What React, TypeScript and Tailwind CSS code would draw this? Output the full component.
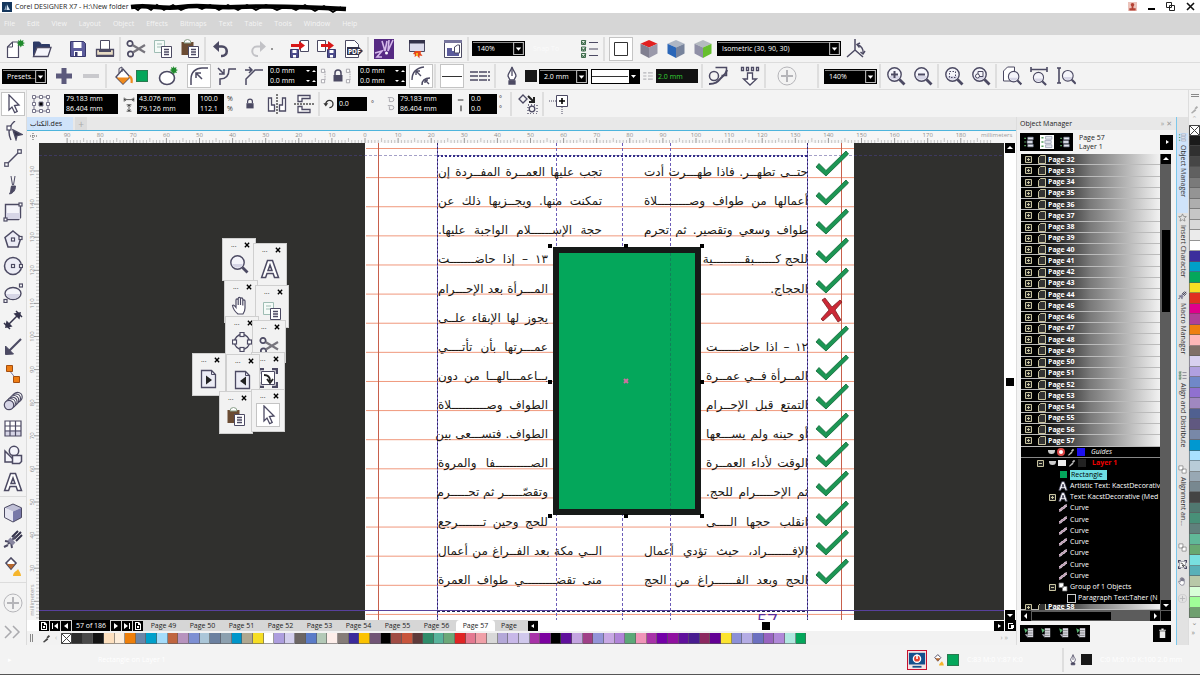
import React from 'react';

const INK = '#4c4a63';

const doc = (
  <g fill="#fff" stroke={INK}>
    <path d="M8.5 7.5h10v11h-10z" />
    <path d="M11 10.5h5M11 13h5M11 15.5h5" strokeWidth="1.3" />
  </g>
);

const lens = (
  <g>
    <circle cx="8.500" cy="8.500" r="6.700" fill="#f4f4fa" stroke={INK} strokeWidth="1.400" />
    <path d="M3 10h11a6 6 0 0 1-11 0z" fill="#d6d5e6" />
    <path d="M13.500 13.500l5 5" stroke={INK} strokeWidth="2.800" />
  </g>
);

const cube = (top: string, left: string, right: string) => (
  <g>
    <path d="M10 1l8.500 3.800L10 8.600 1.500 4.800z" fill={top} />
    <path d="M1.500 4.800L10 8.600V19l-8.500-4.500z" fill={left} />
    <path d="M18.500 4.800L10 8.600V19l8.500-4.500z" fill={right} />
  </g>
);

const burst = <path d="M15.500 0l1 2 2-1-.5 2.200 2 .8-2 1 1 2-2.200-.6-1 2.100-1-2.100-2.200.6 1-2-2-1 2-.8L13 1l2 1z" fill="#1f8a2c" />;

const clipboard = (
  <g>
    <path d="M1.500 3h12v13h-12z" fill="#6b4c33" />
    <path d="M4 4a3.500 3.500 0 0 1 7 0z" fill="#fff" stroke="#8aa08a" />
    {doc}
  </g>
);

const floppy = (
  <g>
    <path d="M2.500 2.500h13l2 2v13h-15z" fill="#5c5c9c" stroke="#38386c" />
    <path d="M5.500 3h8v6h-8zM6 12h8v5H6z" fill="#fff" />
    <path d="M7 13h2.500v4H7z" fill="#38386c" />
  </g>
);

const smallFloppy = (x: number) => (
  <g transform={`translate(${x} 10)`}>
    <path d="M.5.5h8v8h-8z" fill="#4c4c8c" stroke="#38386c" />
    <path d="M2.500 1h4v3h-4zM3 6h3v2.500H3z" fill="#fff" />
  </g>
);

const node = (x: number, y: number, s = 3) => (
  <rect x={x - s / 2} y={y - s / 2} width={s} height={s} fill="#fff" stroke={INK} strokeWidth="1.200" />
);

const letterA = <path d="M7.500 1.500h5l6 17h-4l-1.400-4H7l-1.400 4h-4zM10 6l-2 5.500h4z" fill="#fff" stroke={INK} strokeWidth="1.500" />;

const padlock = (
  <g>
    <path d="M7 9V7a3 3 0 0 1 6 0v2" fill="none" stroke={INK} strokeWidth="1.500" />
    <path d="M5.500 9h9v6.500h-9z" fill={INK} />
  </g>
);

const pen = (
  <g fill="#fff" stroke={INK} strokeWidth="1.300">
    <path d="M10 1c1 4 4 6 4 9l-2 4H8l-2-4c0-3 3-5 4-9z" />
    <path d="M10 3v7" />
    <path d="M7 15h6v3H7z" fill={INK} />
  </g>
);

const icons = {
  app: <g><path d="M0 0h20v20H0z" fill="#14365c" /><path d="M5 16L9 3l7 13z" fill="#dcebf8" /><path d="M9 3l-1 13" stroke="#14365c" strokeWidth="2" /></g>,
  fresh: <g><path d="M2.500 8l5-5h6v15.500h-11z" fill="#fff" stroke={INK} strokeWidth="1.200" /><path d="M7.500 3v5h-5" fill="none" stroke={INK} />{burst}</g>,
  open: <g><path d="M1.500 17V3h6l2 2.500h8V8" fill="#2d3a66" stroke="#2d3a66" /><path d="M1.500 17.500L5 8.500h14l-3 9z" fill="#f5f5fb" stroke={INK} strokeWidth="1.300" /></g>,
  save: floppy,
  print: <g><path d="M5.500 1.500h9v9h-9z" fill="#fff" stroke={INK} /><path d="M1.500 10.500h17v6h-17z" fill="#e8dcc4" stroke={INK} strokeWidth="1.300" /><path d="M1 16h18v2H1z" fill={INK} /><path d="M4 10h12v3H4z" fill={INK} /></g>,
  cut: <g fill="none" stroke={INK} strokeWidth="1.700"><circle cx="4" cy="4.500" r="2.700" /><circle cx="4.500" cy="15" r="2.700" /><path d="M6.500 6L19 13.500M6.800 13.500L19 6" strokeWidth="2.200" stroke="#77757d" /></g>,
  copy: <g><path d="M1.500 1.500h10v12h-10z" fill="#f5fbf8" stroke="#9fbdb4" /><path d="M4 5h5M4 8h5" stroke="#9fbdb4" />{doc}</g>,
  paste: clipboard,
  undo: <g fill="none" stroke={INK} strokeWidth="2.600"><path d="M4 7.500h7a4.600 4.600 0 0 1 0 9.500h-1" /><path d="M8 2L2 7.500 8 13z" fill={INK} stroke="none" /></g>,
  redo: <g fill="none" stroke="#c2c2c6" strokeWidth="2"><path d="M16 7.500H9a4.600 4.600 0 0 0 0 9.500h1" /><path d="M12 2l6 5.500L12 13z" fill="#c2c2c6" stroke="none" /></g>,
  load: <g><path d="M11.500 1.500h8v11h-8z" fill="#fff" stroke={INK} />{smallFloppy(1)}<path d="M2 5h8V2l6 4.500L10 11V8H2z" fill="#d81818" /></g>,
  send: <g><path d="M1.500 1.500h8v11h-8z" fill="#fff" stroke={INK} />{smallFloppy(11)}<path d="M5 5h7V2l6 4.500L12 11V8H5z" fill="#d81818" /></g>,
  pdf: <g><path d="M2.500 1.500h9l4 4v13h-13z" fill="#fff" stroke={INK} /><path d="M4 8h12l4 4-4 4H4z" fill="#33324a" /><text x="5" y="14.500" fontSize="6.500" fontWeight="700" fill="#fff">PDF</text></g>,
  studio: <g><path d="M0 0h20v20H0z" fill="#562a83" /><path d="M1 14l7-2-5 6h5M8 2l3 10 2-10M15 1l-1 11 5-11" fill="none" stroke="#d5b8ea" strokeWidth="1.600" /><circle cx="12.500" cy="14" r="1.500" fill="#fff" /></g>,
  launch: <g><path d="M2.500 1.500h15v11h-15z" fill="#dcdcec" stroke={INK} /><path d="M2 1h16v3.500H2z" fill="#33324a" /><path d="M8 12l-2 3 2 .5-.5 2.500 2.500-1.500 2.500 3v-3l3 .5-2-3 1-2z" fill="#e5461c" /><path d="M9 14h2v3H9z" fill="#f8b020" /></g>,
  welcome: <g><path d="M1.500 1.500h17v17h-17z" fill="#fff" stroke={INK} /><path d="M1 1h18v3H1z" fill="#77759c" /><path d="M4 9h5v3h7v5H4z" fill="#5c5c9c" /><path d="M11.500 8l3-2h2v8h-5z" fill="#fff" stroke={INK} /></g>,
  options: <g fill="none" stroke="#3f6b4c"><path d="M2.500 1.500h4v4h-4zM2.500 8h4v4h-4zM2.500 14.500h4v4h-4z" fill="#e6f3e6" /><path d="M3 3l1.500 2L7 1.500M3 9.500L4.500 11.500 7 8M3 16l1.500 2L7 14.500" strokeWidth="1.200" /><path d="M10 3.500h9M10 10h9M10 16.500h9" stroke={INK} strokeWidth="1.200" /></g>,
  square: <path d="M3.500 3.500h13v13h-13z" fill="#fff" stroke="#333" />,
  cubeTop: cube('#e22020', '#807f90', '#9a99aa'),
  cubeLeft: cube('#aeb6c4', '#2a66b8', '#77839c'),
  cubeRight: cube('#b4bac0', '#8f8fa6', '#66bf2e'),
  axes: <g fill="none" stroke={INK} strokeWidth="1.500"><path d="M9 0v11L1 18M9 11l8 7" /><path d="M12 6a7 7 0 0 1 5 8" /><path d="M14 4l-3 1.500 2.500 3M19 12l-2 3-2.500-2" /></g>,
  plus: <path d="M7.500 2h5v5.500H18v5h-5.500V18h-5v-5.500H2v-5h5.500z" fill="#5c5a7c" />,
  minus: <path d="M2 8h16v4H2z" fill="#c9c9cd" />,
  bucket: <g><path d="M3 11l7-8 7 8-7 7z" fill="#fff" stroke={INK} strokeWidth="1.400" /><path d="M3.500 11.500h13L10 18z" fill="#ef8a1c" /><path d="M6 7V2.500L9 1v5" fill="none" stroke={INK} /><path d="M16 10c3 1 3 4 2.500 7" fill="none" stroke="#ef8a1c" strokeWidth="2.200" /></g>,
  convert: <g><ellipse cx="9" cy="12" rx="7.500" ry="6.500" fill="#fff" stroke={INK} strokeWidth="1.600" />{burst}</g>,
  round: <g fill="none" stroke={INK} strokeWidth="1.500"><path d="M2 19v-6C2 6 7 2 13 2h6" /><path d="M7 7l6 6M7 12V7h5" /></g>,
  scallop: <g fill="none" stroke={INK} strokeWidth="1.500"><path d="M3 19v-6c7 0 9-4 9-10h7" /><path d="M1 2l6 6M7 3v5H2" /></g>,
  chamfer: <g fill="none" stroke={INK} strokeWidth="1.500"><path d="M2 19v-6L11 4h8" /><path d="M1 4h7M5 1l3 3-3 3" /></g>,
  chain: <g fill="#fff" stroke="#99989f"><path d="M10 4v12" strokeDasharray="2 1" /><path d="M5.500 1.500h4v4h-4zM5.500 14.500h4v4h-4z" /></g>,
  lock: padlock,
  relative: <g fill="none" stroke={INK} strokeWidth="1.400"><path d="M1 14C1 6 5 2 13 1M11 19c0-5 3-7 8-7" /><path d="M5 5l5 5M5 9V5h4M14 14l4 4M14 17v-3h3" /></g>,
  line: <path d="M0 10.500h20" stroke="#333" />,
  dashes: <path d="M0 6h20M0 14h20M0 10h20" stroke={INK} strokeWidth="1.600" strokeDasharray="8 1" />,
  pen,
  bars: <path d="M4 6h4M4 10h4M4 14h4M10 6h6M10 10h6M10 14h6" stroke="#b5b5ba" strokeWidth="1.500" />,
  path: <g fill="none" stroke={INK} strokeWidth="1.500"><path d="M7.500 1.500h11v8h-5" /><circle cx="6" cy="10" r="4.500" /><path d="M1 18c8 0 9-3 12-6s5-4 6-8" strokeWidth="2" /></g>,
  down: <g fill="#fff" stroke={INK} strokeWidth="1.300"><path d="M1.500 1.500h2v3h-2zM6.500 1.500h2v3h-2zM11.500 1.500h2v3h-2zM16.500 1.500h2v3h-2z" /><path d="M7.500 7h5v6h4L10 19l-6.500-6h4z" /></g>,
  add: <g fill="none" stroke="#b5b5b9"><circle cx="10" cy="10" r="9" /><path d="M10 4v12M4 10h12" strokeWidth="2" /></g>,
  zoomIn: <g>{lens}<path d="M8.500 5v7M5 8.500h7" stroke={INK} strokeWidth="2" /></g>,
  zoomOut: <g>{lens}<path d="M5 8.500h7" stroke={INK} strokeWidth="2" /></g>,
  zoomSel: <g>{lens}<path d="M5.500 5.500h6v6h-6z" fill="none" stroke={INK} strokeDasharray="1.500 1.500" /></g>,
  zoomAll: <g>{lens}<path d="M7 5.500h5v5H7z" fill="none" stroke={INK} /><circle cx="6.500" cy="10" r="2" fill="#fff" stroke={INK} /></g>,
  zoomPage: <g><path d="M1.500 5l4-4h7v14h-11z" fill="#fff" stroke={INK} /><g transform="translate(5 4) scale(.78)">{lens}</g></g>,
  zoomWidth: <g><path d="M2 1v5M18 1v5M2 3.500h16" stroke={INK} strokeWidth="1.600" /><g transform="translate(3 5) scale(.76)">{lens}</g></g>,
  zoomHeight: <g><path d="M1 2h4M1 17h4M3 2v15" stroke={INK} strokeWidth="1.600" /><g transform="translate(5 3) scale(.8)">{lens}</g></g>,
  pick: <path d="M6 1l10 10-4.500.5 2.700 6-2.500 1.200L9 13l-3 3z" fill="#fff" stroke={INK} strokeWidth="1.300" />,
  shape: <g fill="none" stroke={INK} strokeWidth="1.400"><path d="M12 0C7 4 6 7 6 11s1 6 2 8" />{node(6, 7, 4)}<path d="M10 9l9 4.500-5 1-1 4z" fill="#33324a" /></g>,
  segment: <g><path d="M3.500 16.500l13-13" stroke={INK} strokeWidth="1.500" />{node(3.500, 16.500, 3.500)}{node(16.500, 3.500, 3.500)}</g>,
  brush: <g stroke={INK} fill={INK}><path d="M8 1l1.500 9M12 1l-1.500 9" /><path d="M8.500 11h4c0 4-2 7-6 8 2-3 1-5 2-8z" /></g>,
  rect: <g><path d="M2.500 2.500h15v13l-2 2h-13z" fill="#f4f4fa" stroke={INK} strokeWidth="1.400" /><path d="M3 11h14v6H3z" fill="#d6d5e6" />{node(2.500, 17.500)}{node(17.500, 2.500)}</g>,
  polygon: <g><path d="M10 2l8 6.500-3 9.500H5L2 8.500z" fill="#ececf5" stroke={INK} strokeWidth="1.500" />{node(10, 10.500)}{node(17.500, 9)}</g>,
  circle: <g><circle cx="10" cy="10" r="8.500" fill="#ececf5" stroke={INK} strokeWidth="1.500" />{node(10, 10)}{node(18, 10)}</g>,
  ellipse: <g><ellipse cx="10" cy="10.500" rx="8" ry="6" fill="#f4f4fa" stroke={INK} strokeWidth="1.400" /><path d="M3 11h14c-1 3-4 5-7 5s-6-2-7-5z" fill="#d6d5e6" />{node(2.500, 18)}{node(18, 2.500)}</g>,
  dimension: <g stroke="#33324a" strokeWidth="1.500" fill="#33324a"><path d="M4 16L16 4M1 13l6 6M13 1l6 6" /><path d="M3 17l1-5 4 4zM17 3l-5 1 4 4z" /></g>,
  arrow: <g stroke={INK} strokeWidth="2.200" fill={INK}><path d="M18 2L5 15" /><path d="M2.500 17.500V9l8 8z" strokeWidth="1" /></g>,
  connector: <g><path d="M6 6l8 10" stroke="#77a" /><path d="M3.500 1.500h6v6h-6zM10.500 12.500h6v6h-6z" fill="#ee7d14" stroke="#a34e10" /></g>,
  spring: <g fill="#fff" stroke={INK} strokeWidth="1.200"><circle cx="14.500" cy="6" r="4.700" /><circle cx="12.800" cy="7.600" r="4.700" /><circle cx="11.100" cy="9.200" r="4.700" /><circle cx="9.400" cy="10.800" r="4.700" /><circle cx="7.700" cy="12.400" r="4.700" /><circle cx="6" cy="14" r="4.700" fill="#d6d5e6" /></g>,
  table: <g><path d="M2 3h16v15H2z" fill="#fff" /><path d="M2 12h16v6H2z" fill="#d6d5e6" /><path d="M2 3h16v15H2zM2 8h16M2 13h16M7 3v15M12.500 3v15" fill="none" stroke={INK} strokeWidth="1.200" /></g>,
  shapes: <g fill="#f4f4fa" stroke={INK} strokeWidth="1.500"><path d="M2 6v11h11z" /><circle cx="11" cy="6" r="4.700" /><path d="M9.500 10.500h9v6l-2 2h-7z" /></g>,
  letter: letterA,
  solid: <g>{cube('#bfbfd6', '#e4e4f0', '#7878a8')}<path d="M10 1l8.500 3.800v9.700L10 19l-8.500-4.500V4.800z" fill="none" stroke={INK} /></g>,
  wrench: <g stroke={INK} fill="none" strokeWidth="2"><path d="M11 9l7-7M13 11l6-6M9 7l6-6" stroke="#33324a" /><path d="M13 6L5 14M2 11l6 1 1 6M1 17l4-2" /><path d="M6 9l5 5" strokeWidth="4" stroke="#8886a0" /></g>,
  fill: <g><path d="M3 6l5-5 5 5-5 6z" fill="#fff" stroke={INK} strokeWidth="1.600" /><path d="M4 7h8L8 12z" fill="#b8692e" /><path d="M10 19h8c0-3-2-5-3-7-1 2-5 3-5 7z" fill="#f5b52c" /></g>,
  more: <path d="M2 4l6 6-6 6M10 4l6 6-6 6" fill="none" stroke="#aaaaae" strokeWidth="1.500" />,
  box9: <g fill="#fff" stroke="#77758a"><path d="M3 3h14v14H3z" fill="none" /><path d="M1.500 1.500h3v3h-3zM8.500 1.500h3v3h-3zM15.500 1.500h3v3h-3zM1.500 8.500h3v3h-3zM15.500 8.500h3v3h-3zM1.500 15.500h3v3h-3zM8.500 15.500h3v3h-3zM15.500 15.500h3v3h-3z" /><path d="M8 8h4v4H8z" fill="#000" /></g>,
  size: <g stroke="#333" fill="none"><path d="M4 2v5M16 2v5M4 4.500h12M6 3L4.500 4.500 6 6M14 3l1.500 1.500L14 6M7 11h6M7 19h6M10 11v8M8 13l2-1.500 2 1.500M8 17l2 1.500 2-1.500" /></g>,
  mirrorH: <g fill="#fff" stroke={INK}><path d="M1.500 4h3v7h3v6h-6zM18.500 4h-3v7h-3v6h6z" strokeWidth="1.300" /><path d="M10 0v20" stroke="#000" strokeDasharray="2 1" /></g>,
  mirrorV: <g fill="#fff" stroke={INK}><path d="M4 1.500h12v3H8v3H4zM4 18.500h12v-3H8v-3H4z" strokeWidth="1.300" /><path d="M0 10h20" stroke="#000" strokeDasharray="2 1" /></g>,
  rotate: <g fill="none" stroke="#333" strokeWidth="1.600"><path d="M6 10a4.500 4.500 0 1 1 4.500 4.500" /><path d="M3 9l3 4 3-4z" fill="#333" stroke="none" /></g>,
  centre: <g fill="none" stroke="#99989f"><path d="M6 2h5a2.500 2.500 0 0 1 0 5H8v-4M6 12h5a2.500 2.500 0 0 1 0 5H8v-4" /></g>,
  skew: <path d="M6 5h7M10 12v7" stroke="#333" strokeWidth="1.400" />,
  apply: <g fill="none" stroke={INK} strokeWidth="1.300"><path d="M5 1l4 4-4 4-4-4z" /><path d="M10 2l6 6M16 3v5h-5" strokeWidth="2" stroke="#222" /><circle cx="14" cy="15" r="2.800" /><path d="M10 11h9v9h-9z" strokeDasharray="1 2" /></g>,
  origin: <g fill="none" stroke={INK}><path d="M7.500 1.500h11v11h-11z" fill="#fff" /><path d="M13 4v6M10 7h6" stroke="#000" strokeWidth="1.600" /><path d="M0 7h7M13 13v7" strokeDasharray="1 1" /></g>,
  zoom: lens,
  hand: <path d="M7 18C3 15 2 12 1.500 9.500c1-1 2 0 3.500 2V4c0-1.500 2-1.500 2.200 0V9 2.500c0-1.600 2.300-1.600 2.300 0V9 3c0-1.600 2.300-1.600 2.300 0v6.500V5c0-1.500 2.200-1.500 2.200 0v7c0 3-1 4.500-2 6z" fill="#fff" stroke={INK} strokeWidth="1.200" />,
  nodes: <g><circle cx="10" cy="10" r="7.500" fill="none" stroke={INK} strokeWidth="1.400" />{node(10, 2.500, 4)}{node(10, 17.500, 4)}{node(2.500, 10, 4)}{node(17.500, 10, 4)}</g>,
  next: <g><path d="M2.500 1.500h10l4 4v13h-14z" fill="#ececf5" stroke={INK} strokeWidth="1.300" /><path d="M12.500 1.500v4h4" fill="none" stroke={INK} /><path d="M7 6.500v9l6-4.500z" fill="#222" /></g>,
  prev: <g><path d="M2.500 1.500h10l4 4v13h-14z" fill="#ececf5" stroke={INK} strokeWidth="1.300" /><path d="M12.500 1.500v4h4" fill="none" stroke={INK} /><path d="M13 6.500v9L7 11z" fill="#222" /></g>,
  turn: <g fill="none" stroke={INK}><path d="M3.500 3.500h13v13h-13z" fill="#fff" /><path d="M1 6V1h5M14 1h5v5M19 14v5h-5M6 19H1v-5" strokeWidth="2.500" /><path d="M6 7c4 0 6 2 6 6M9 11l3 4 3-4" stroke="#222" strokeWidth="1.800" /></g>,
  dropper: <path d="M2 18l9-9 3 3-9 7zM10 7l5-5 3 3-5 5z" fill="#444" />,
  trash: <path d="M5 6h10v12H5zM4 3h12v2H4zM8 1h4v2H8z" fill="#eee" />,
  layers: <g fill="#e6e6ee" stroke="#8a94a8"><path d="M8 2h9v4H8zM7 8h9v4H7zM8 14h9v4H8z" /><path d="M2 3h3v2H2zM2 9h3v2H2zM2 15h3v2H2z" fill="#56a060" stroke="none" /></g>,
  newLayer: <g><path d="M8 2h9v15H8z" fill="#d8d8e0" /><path d="M8 6h8M8 10h8M8 14h8" stroke="#555" /><path d="M2 2l6 3-4 5z" fill="#58b070" /><path d="M3 12h5v6z" fill="#a8a8b4" /></g>,
  curve: <g fill="none" stroke="#e8d8e8" strokeWidth="5"><path d="M2 15c6 0 4-5 8-5s2-5 8-5" /><path d="M2 15c6 0 4-5 8-5s2-5 8-5" stroke="#94607c" strokeWidth="1.500" /></g>,
  person: <g><path d="M0 0h20v20H0z" fill="#ecc4bc" /><circle cx="10" cy="6" r="4" fill="#b44134" /><path d="M8 9h4v5h5v5H3v-5h5z" fill="#b44134" /></g>,
  star: <path d="M10 2l2.500 5.500 6 .5-4.500 4 1.500 6-5.500-3-5.500 3L6 12 1.500 8l6-.5z" fill="none" stroke="#777" strokeWidth="1.500" />,
  squares: <g fill="#fff" stroke="#777" strokeWidth="1.500"><path d="M2 2h9v9H2zM9 9h9v9H9z" /></g>,
  power: <g><path d="M0 0h20v20H0z" fill="#f4e4e4" /><path d="M1 2h18v13H1z" fill="#14508c" /><circle cx="10" cy="8.500" r="4" fill="#e04030" stroke="#fff" strokeWidth="1.500" /><path d="M10 4v5" stroke="#fff" strokeWidth="1.800" /><path d="M5 17.500h10" stroke="#14508c" strokeWidth="2" /></g>,
};

type IconName = keyof typeof icons;

const Icon: React.FC<{ name: IconName; className?: string }> = ({ name, className = 'size-5' }) => (
  <svg viewBox="0 0 20 20" className={`${className} shrink-0`} aria-hidden="true">{icons[name]}</svg>
);

const Tool: React.FC<{ name: IconName; className?: string; active?: boolean; narrow?: boolean }> = ({ name, className = '', active, narrow }) => (
  <button
    aria-label={name}
    className={`flex shrink-0 items-center justify-center ${active ? 'h-6 w-6 border border-[#c4c4c4] bg-white' : narrow ? 'h-6 w-4' : 'h-6 w-[27px]'} ${className}`}
  >
    <Icon name={name} className={narrow ? 'size-4' : 'size-5'} />
  </button>
);

const Sep: React.FC = () => <div className="mx-px h-6 w-px shrink-0 border-x border-[#dedede]" />;

const Combo: React.FC<{ label: string; value: string; className: string }> = ({ label, value, className }) => (
  <div className={`relative h-[15px] shrink-0 border border-black bg-black text-white ${className}`}>
    <select aria-label={label} className="h-full w-full appearance-none border-t border-[#888] pl-1 leading-3">
      <option>{value}</option>
    </select>
    <svg viewBox="0 0 10 12" className="pointer-events-none absolute top-0 right-0 h-[13px] w-[11px]">
      <path d="M.5.5h9v11h-9z" fill="#000" stroke="#bbb" />
      <path d="M2.500 5h5L5 8z" fill="#fff" />
    </svg>
  </div>
);

const Pair: React.FC<{ label: string; values: string[]; className: string; spin?: boolean }> = ({ label, values, className, spin }) => (
  <div className={`relative flex h-[20px] shrink-0 flex-col bg-black text-white ${className}`}>
    {values.map((v, i) => (
      <input key={i} aria-label={`${label} ${i + 1}`} defaultValue={v} className="h-[10px] w-full bg-black pl-0.5 leading-[10px]" />
    ))}
    {spin && (
      <svg viewBox="0 0 12 20" className="absolute top-0 right-0 h-5 w-3">
        <path d="M1 4h4L3 6zM7 6h4L9 4zM1 14h4l-2 2zM7 16h4l-2-2z" fill="#fff" />
      </svg>
    )}
  </div>
);

const menus = ['File', 'Edit', 'View', 'Layout', 'Object', 'Effects', 'Bitmaps', 'Text', 'Table', 'Tools', 'Window', 'Help'];

const Header: React.FC = () => (
  <header>
    <div className="flex h-[13px] items-center bg-white pl-[2px] text-[#222]">
      <Icon name="app" className="size-[10px]" />
      <span className="ml-[3px] whitespace-nowrap">Corel DESIGNER X7 - H:\New folder</span>
      <svg viewBox="0 0 222 12" className="h-3 w-[222px]" fill="none" stroke="#000">
        <path d="M2 6c20-3 30 3 50 0s30 1 55 0 60-1 110 2" strokeWidth="4.500" />
        <path d="M3 5l6 4 5-5 8 5 6-5 7 5 9-5 8 5 12-5 9 4 8-4 9 5 9-5 10 5 9-5 9 5 10-5 11 5 10-4 9 4 9-5 10 6 9-5 9 6 8-5" strokeWidth="1.800" />
      </svg>
      <div className="ml-auto flex items-center gap-[11px] pr-[5px]">
        <Icon name="person" className="size-[9px]" />
        <button aria-label="Minimize" className="mt-1 h-[2px] w-[7px] bg-black" />
        <button aria-label="Restore"><svg viewBox="0 0 9 9" className="size-[9px]" fill="#fff" stroke="#222"><path d="M.5.5h5v5h-5zM3.500 3.500h5v5h-5z" /></svg></button>
        <button aria-label="Close"><svg viewBox="0 0 9 9" className="size-[9px]" stroke="#111" strokeWidth="1.600"><path d="M1 1l7 7M8 1L1 8" /></svg></button>
      </div>
    </div>
    <nav className="flex h-[22px] items-center gap-3 bg-[#d6d6d6] pl-1 text-[#f4f4f4]">
      {menus.map((m) => <button key={m}>{m}</button>)}
    </nav>
  </header>
);

const StandardBar: React.FC = () => (
  <div className="flex h-[28px] items-center border-b border-[#dcdcdc] pl-px">
    <Tool name="fresh" />
    <Tool name="open" />
    <Tool name="save" className="ml-[9px]" />
    <Tool name="print" />
    <Sep />
    <Tool name="cut" />
    <Tool name="copy" />
    <Tool name="paste" />
    <Sep />
    <Tool name="undo" />
    <Tool name="redo" className="ml-[10px]" />
    <span className="size-[2px] rounded-full bg-[#777]" />
    <Tool name="load" className="ml-3" />
    <Tool name="send" />
    <Tool name="pdf" />
    <Sep />
    <Tool name="studio" />
    <Tool name="launch" className="ml-[6px]" />
    <Tool name="welcome" className="ml-[9px]" />
    <Sep />
    <Combo label="Zoom level" value="140%" className="ml-[2px] w-[53px]" />
    <span className="w-[50px] pl-2 text-[#fafafa]">Snap To</span>
    <Tool name="options" />
    <Sep />
    <Tool name="square" active className="ml-[3px]" />
    <Tool name="cubeTop" className="ml-[2px]" />
    <Tool name="cubeLeft" />
    <Tool name="cubeRight" />
    <Combo label="Projection" value="Isometric (30, 90, 30)" className="ml-px w-[124px]" />
    <Tool name="axes" className="ml-px" />
  </div>
);

const CurveBar: React.FC = () => (
  <div className="flex h-[27px] items-center border-b border-[#dcdcdc] pl-[2px]">
    <Combo label="Presets" value="Presets..." className="w-[45px]" />
    <Tool name="plus" className="ml-[3px]" />
    <Tool name="minus" />
    <Sep />
    <Tool name="bucket" className="ml-px" />
    <button aria-label="Fill colour" className="size-3 border border-[#2b7a50] bg-[#04a75b]" />
    <Tool name="convert" className="ml-[6px]" />
    <Tool name="round" active className="ml-[6px]" />
    <Tool name="scallop" className="ml-[2px]" />
    <Tool name="chamfer" />
    <Pair label="Corner radius left" values={['0.0 mm', '0.0 mm']} className="ml-px w-[49px]" spin />
    <Tool name="chain" narrow className="-mr-2" />
    <Tool name="lock" className="-mx-px" />
    <Tool name="chain" narrow className="-ml-2" />
    <Pair label="Corner radius right" values={['0.0 mm', '0.0 mm']} className="w-[48px]" spin />
    <Tool name="relative" active className="ml-[3px]" />
    <Sep />
    <Tool name="line" active className="ml-[3px]" />
    <Tool name="dashes" className="ml-[2px]" />
    <Sep />
    <Tool name="pen" className="ml-px" />
    <span className="size-3 bg-[#181818]" />
    <Combo label="Outline width" value="2.0 mm" className="ml-[2px] w-[49px]" />
    <div className="relative ml-[3px] h-[15px] w-[49px] shrink-0 border border-black bg-white">
      <select aria-label="Line style" className="h-full w-full appearance-none text-transparent"><option>Solid</option></select>
      <svg viewBox="0 0 47 13" className="pointer-events-none absolute inset-0 h-[13px] w-[47px]"><path d="M0 6.500h36" stroke="#333" /><path d="M37 0h10v13H37z" /><path d="M39 5h5l-2.500 3z" fill="#fff" /></svg>
    </div>
    <Tool name="bars" narrow />
    <input aria-label="Blend spacing" defaultValue="2.0 mm" className="h-[14px] w-[42px] shrink-0 bg-[#111] pl-[2px] text-[#35d435]" />
    <span className="w-[2px]" />
    <Sep />
    <Tool name="path" />
    <Tool name="down" className="ml-[5px]" />
    <Sep />
    <Tool name="add" className="ml-[6px]" />
    <span className="w-4" />
    <Sep />
    <Combo label="Zoom" value="140%" className="ml-[4px] w-[53px]" />
    <span className="w-px" />
    <Sep />
    <Tool name="zoomIn" />
    <Tool name="zoomOut" />
    <Sep />
    <Tool name="zoomSel" />
    <Tool name="zoomAll" />
    <Sep />
    <Tool name="zoomPage" />
    <Tool name="zoomWidth" />
    <Tool name="zoomHeight" />
  </div>
);

const PropertyBar: React.FC = () => (
  <div className="flex h-[27px] shrink-0 items-center">
    <Tool name="box9" />
    <Pair label="Position" values={['79.183 mm', '86.404 mm']} className="ml-[10px] w-[54px]" />
    <Tool name="size" narrow className="ml-[3px]" />
    <Pair label="Size" values={['43.076 mm', '79.126 mm']} className="w-[53px]" />
    <Pair label="Scale" values={['100.0', '112.1']} className="ml-2 w-[26px]" />
    <span className="ml-[3px] flex w-3 flex-col leading-[10px]"><span>%</span><span>%</span></span>
    <Tool name="lock" narrow className="ml-[3px]" />
    <Tool name="mirrorH" className="ml-[5px]" />
    <Tool name="mirrorV" />
    <Sep />
    <Tool name="rotate" narrow />
    <input aria-label="Rotation" defaultValue="0.0" className="h-[14px] w-[30px] shrink-0 bg-black pl-[2px] text-white" />
    <span className="w-4 pl-1">°</span>
    <Tool name="centre" narrow />
    <Pair label="Rotation centre" values={['79.183 mm', '86.404 mm']} className="-ml-px w-[54px]" />
    <Tool name="skew" narrow className="ml-px" />
    <Pair label="Skew" values={['0.0', '0.0']} className="w-[28px]" />
    <span className="flex w-3 flex-col pl-[2px] leading-[10px]"><span>°</span><span>°</span></span>
    <Sep />
    <Tool name="apply" className="ml-px" />
    <Sep />
    <Tool name="origin" />
  </div>
);

const tools: IconName[] = ['shape', 'segment', 'brush', 'rect', 'polygon', 'circle', 'ellipse', 'dimension', 'arrow', 'connector', 'spring', 'table', 'shapes', 'letter'];

const Toolbox: React.FC = () => (
  <aside className="flex w-[27px] shrink-0 flex-col items-center border-r border-[#dcdcdc]">
    <div className="flex h-[27px] items-center"><Tool name="pick" active /></div>
    {tools.map((t) => <div key={t} className="flex h-[27px] items-center"><Tool name={t} /></div>)}
    <div className="mt-px border-t border-[#dcdcdc] pt-[2px]">
      {(['solid', 'wrench', 'fill'] as IconName[]).map((t) => <div key={t} className="flex h-[27px] items-center"><Tool name={t} /></div>)}
    </div>
    <div className="mt-[2px] border-t border-[#dcdcdc] pt-2">
      <Tool name="add" />
      <Tool name="more" className="mt-[5px]" />
    </div>
  </aside>
);

const RULER_STEP = 33.1;

const TopRuler: React.FC = () => {
  const marks = Array.from({ length: 28 }, (_, i) => i - 9);
  return (
    <svg className="block h-[12px] w-full bg-[#f6f6f6]" fontSize="6">
      <path d="M6 2v8M3 5h8" stroke="#555" strokeDasharray="1 1" />
      {marks.map((m) => {
        const x = 338 + m * RULER_STEP;
        return (
          <g key={m}>
            {[1, 2, 3, 4, 5, 6, 7, 8, 9].map((k) => <path key={k} d={`M${x + k * 3.31} ${k === 5 ? 7 : 9}v4`} stroke="#c4c4c4" />)}
            <path d={`M${x} 7v5`} stroke="#999" />
            <text x={x} y="6" textAnchor="middle" fill="#8c8c8c">{Math.abs(m * 10)}</text>
          </g>
        );
      })}
      <text x="954" y="6" fill="#9a9a9a">millimeters</text>
    </svg>
  );
};

const SideRuler: React.FC = () => (
  <svg className="w-3 shrink-0 bg-[#f6f6f6]" fontSize="6">
    {Array.from({ length: 14 }, (_, i) => {
      const y = 28 + i * RULER_STEP;
      return (
        <g key={i}>
          {[1, 2, 3, 4, 5, 6, 7, 8, 9].map((k) => <path key={k} d={`M9 ${y + k * 3.31}h3`} stroke="#c4c4c4" />)}
          <path d={`M7 ${y}h5`} stroke="#999" />
          {i < 13 && <text transform={`translate(7 ${y}) rotate(-90)`} textAnchor="middle" fill="#8c8c8c">{150 - i * 10}</text>}
        </g>
      );
    })}
    <text transform="translate(7 457) rotate(-90)" textAnchor="middle" fill="#9a9a9a">millimeters</text>
  </svg>
);

const leftText = [
  'تجب عليها العمــرة المفــردة إن',
  'تمكنت منها. ويجــزيها ذلك عن',
  'حجة الإســــــلام الواجبة عليها.',
  '١٣ – إذا حاضـــــــت',
  'المـــرأة بعد الإحـــرام',
  'يجوز لها الإبقاء علــى',
  'عمـــرتها بأن تأتــــي',
  'بــاعمـــالهــا من دون',
  'الطواف وصــــــــــلاة',
  'الطواف. فتســـعى بين',
  'الصــــــــــفا والمروة',
  'وتقصّـــــر ثم تحـــــرم',
  'للحج وحين تـــــــرجع',
  'الــي مكة بعد الفــراغ من أعمال',
  'منى تقضـــــــــي طواف العمرة',
];

const rightText = [
  'حتــى تطهــر. فاذا طهـــرت أدت',
  'أعمالها من طواف وصـــــــــلاة',
  'طواف وسعي وتقصير. ثم تحرم',
  'للحج كــــــبقـــــــــية',
  'الحجاج.',
  '',
  '١٢ – اذا حاضــــــت',
  'المــرأة فــي عمــرة',
  'التمتع قبل الإحــرام',
  'أو حينه ولم يســـعها',
  'الوقت لأداء العمــرة',
  'ثم الإحـــــرام للحج.',
  'انقلب حجها الــــى',
  'الإفـــــــراد، حيث تؤدي أعمال',
  'الحج وبعد الفــــــراغ من الحج',
];

// Lines 4 to 13 wrap around the green rectangle.
const wraps = (i: number) => i > 2 && i < 13;

const Guides: React.FC = () => (
  <svg className="absolute inset-0 h-full w-full" fill="none">
    {Array.from({ length: 17 }, (_, i) => (
      <path key={i} d={`M327 ${5.5 + i * 29.12}h488`} stroke="#f0987c" />
    ))}
    <path d="M339.500 0v480M802.500 0v480" stroke="#c8604c" />
    <path d="M398.500 0v480M768.500 0v480" stroke="#7a68c4" />
    <path d="M768.500 0v480M398.500 0v480" stroke="#2c2468" strokeDasharray="2 2" />
    <path d="M517.500 0v480M583.500 0v480M631.500 0v480" stroke="#6c5cb8" strokeDasharray="3 2" />
    <path d="M0 12.500h965" stroke="#4a4290" strokeDasharray="3 2" opacity=".5" />
    <path d="M398 13h371" stroke="#342c88" strokeWidth="2" strokeDasharray="2 2" />
    <path d="M0 467.500h965" stroke="#58409c" />
    <path d="M398 468.500h371" stroke="#222050" strokeDasharray="3 2" />
  </svg>
);

const Mark: React.FC<{ ok: boolean }> = ({ ok }) => (
  <svg viewBox="0 0 34 28" className="h-7 w-[34px]">
    {ok
      ? <path d="M1 17l3-3.500 7 7L31 1l2.500 3L11 26z" fill="#1c9654" stroke="#0c6434" strokeWidth=".8" />
      : <path d="M7 4l3-2 7 9 8-7 2 2-7 8 6 10-3 2-6-9-9 8-2-2 8-9z" fill="#cc2836" stroke="#7c2020" strokeWidth=".8" />}
  </svg>
);

const handles = [
  'left-[509px] top-[101px]', 'left-[585px] top-[101px]', 'left-[661px] top-[101px]',
  'left-[509px] top-[237px]', 'left-[661px] top-[237px]',
  'left-[509px] top-[371px]', 'left-[585px] top-[371px]', 'left-[661px] top-[371px]',
];

const floats: { name: IconName; at: string }[] = [
  { name: 'zoom', at: 'left-[183px] top-[95px]' },
  { name: 'letter', at: 'left-[214px] top-[100px]' },
  { name: 'hand', at: 'left-[185px] top-[137px]' },
  { name: 'copy', at: 'left-[216px] top-[142px]' },
  { name: 'nodes', at: 'left-[186px] top-[173px]' },
  { name: 'cut', at: 'left-[213px] top-[177px]' },
  { name: 'turn', at: 'left-[212px] top-[209px]' },
  { name: 'next', at: 'left-[153px] top-[210px]' },
  { name: 'prev', at: 'left-[187px] top-[211px]' },
  { name: 'paste', at: 'left-[180px] top-[248px]' },
  { name: 'pick', at: 'left-[212px] top-[246px]' },
];

const Canvas: React.FC = () => (
  <main className="relative min-w-0 flex-1 overflow-hidden bg-[#30302e]">
    <div className="absolute top-0 left-[326px] h-full w-[489px] bg-white" />
    <Guides />
    {[leftText, rightText].map((lines, c) => (
      <div
        key={c}
        dir="rtl"
        lang="ar"
        className={`absolute top-[15px] grid h-[437px] w-[164px] auto-rows-fr grid-cols-1 font-['DejaVu_Sans',sans-serif] text-[12px] leading-7 text-[#1c1814] ${c === 0 ? 'left-[399px]' : 'left-[605px]'}`}
      >
        {lines.map((line, i) => (
          <p
            key={i}
            className={`whitespace-nowrap ${wraps(i) ? (c === 0 ? 'mr-[54px]' : 'ml-[62px]') : ''} ${line.includes(' ') ? '[text-align-last:justify]' : ''}`}
          >
            {line}
          </p>
        ))}
      </div>
    ))}
    <div className="absolute top-[7px] left-[776px] grid h-[437px] auto-rows-fr">
      {rightText.map((_, i) => <Mark key={i} ok={i !== 5} />)}
    </div>
    <div className="absolute top-[104px] left-[514px] h-[268px] w-[148px] border-6 border-[#161a18] bg-[#04a75b]">
      <svg className="absolute inset-0 h-full w-full"><path d="M111.500 0v256" stroke="#12805a" strokeDasharray="3 2" /><path d="M65 126l4 4M69 126l-4 4" stroke="#d070a0" strokeWidth="2" /></svg>
    </div>
    {handles.map((h) => <span key={h} className={`absolute size-[4px] bg-black ${h}`} />)}
    <span className="absolute top-[465px] left-[718px] text-[18px] leading-6 text-[#5c2c9c]">57</span>
    {floats.map(({ name, at }) => (
      <section key={name} className={`absolute flex h-[43px] w-[34px] flex-col border border-[#cfcfcf] bg-[#f2f2f2] ${at}`}>
        <div className="flex h-[12px] items-center justify-between pr-[5px] pl-2">
          <span className="text-[#333]">...</span>
          <button aria-label={`Close ${name}`}><svg viewBox="0 0 7 7" className="size-[6px]" stroke="#000" strokeWidth="1.600"><path d="M1 1l5 5M6 1L1 6" /></svg></button>
        </div>
        <Tool name={name} className="mt-px self-center" active={name === 'pick'} />
      </section>
    ))}
  </main>
);

const bottomSwatches = [
  '#2e2e2e', '#4a4a4a', '#141414', '#fde0bf', '#feeedb', '#ee7f0a', '#6b86a8', '#00a0cb', '#a5dcfa', '#c0653f', '#b793be', '#7d8fd3',
  '#abc6d8', '#6b80a0', '#8ca0af', '#0096ca', '#b0a890', '#f6de24', '#ffffff', '#ad9ede', '#d4d0ee', '#6c6664', '#5b7cc8', '#b3c9b7',
  '#fdeeea', '#857c78', '#3c2a9c', '#fbc200', '#705475', '#000000', '#a04c44', '#c8553c', '#5e3a3a', '#2e8c6a', '#58b49c', '#6ca878',
  '#e02424', '#e47890', '#f0a0a8', '#d8d8d8', '#b4a8d8', '#c8b8e8', '#d0c8ec', '#a832a8', '#7c00a0', '#000000', '#60109c', '#c4a4e0',
  '#a04088', '#9494d8', '#c8a8e4', '#b084d8', '#5ca878', '#f094b8', '#a832a8', '#7400a8', '#9010a0', '#60109c', '#481c90', '#8c2860',
  '#640094', '#fce430', '#8c90d8', '#b4ace4', '#6c70c0', '#9864c0', '#b088d8', '#b0e8e0', '#04a75b',
];

const sideSwatches = [
  '#1a1a1a', '#303030', '#464646', '#606060', '#7a7a7a', '#949494', '#aeaeae', '#c6c6c6', '#d8d8d8', '#ebebeb', '#ffffff', '#3c2e9c',
  '#00a0c8', '#04a75b', '#f8e024', '#e03020', '#e0008c', '#b04098', '#ee7f10', '#ffb8b8', '#807068', '#d8d0f0', '#b0a0e0', '#7088c8',
  '#9070d0', '#a088c0', '#506090', '#605880', '#7888a8', '#0098d0', '#a8e0ff', '#b8ccd8', '#98a8b4', '#788890', '#444444', '#507870',
  '#489078', '#60807c', '#60b898', '#68a870', '#78e0e0', '#58b0b8', '#b8c8a8', '#d8ffd8', '#a0ff98', '#70a070',
];

const NoColour: React.FC = () => (
  <svg viewBox="0 0 11 11" className="size-[11px] shrink-0" fill="#fff" stroke="#444"><path d="M.5.5h10v10H.5zM.5.5l10 10M10.500.5l-10 10" /></svg>
);

const BlackButton: React.FC<{ label: string; d: string; className?: string }> = ({ label, d, className = 'size-[10px]' }) => (
  <button aria-label={label} className={`flex shrink-0 items-center justify-center bg-black ${className}`}>
    <svg viewBox="0 0 10 10" className="size-[10px]" fill="#fff" fillRule="evenodd"><path d={d} /></svg>
  </button>
);

const ADD_PAGE = 'M2 1h4l2 2v6H2zM3 2v6h4V4H5V2zM4 5h2v2H4z';

const PageTabs: React.FC = () => (
  <div className="flex h-[11px] shrink-0 items-center bg-white pl-3">
    <div className="flex h-full shrink-0 items-center gap-px bg-[#d6d6d6] text-[#222]">
      <BlackButton label="Add page before" d={ADD_PAGE} />
      <BlackButton label="First page" d="M2 2h1v6H2zM8 2v6L4 5z" />
      <BlackButton label="Previous page" d="M7 2v6L3 5z" />
      <span className="h-full w-[38px] bg-black text-center leading-[11px] text-white">57 of 186</span>
      <BlackButton label="Next page" d="M3 2v6l4-3z" />
      <BlackButton label="Last page" d="M7 2h1v6H7zM2 2v6l4-3z" />
      <BlackButton label="Add page after" d={ADD_PAGE} />
      <div className="flex h-full items-center">
        {[49, 50, 51, 52, 53, 54, 55, 56, 57].map((n) => (
          <button key={n} className={`h-full w-[39px] whitespace-nowrap leading-[11px] ${n === 57 ? 'rounded-t-sm bg-white' : ''}`}>Page {n}</button>
        ))}
        <button className="h-full w-[32px] pl-[6px] text-left leading-[11px] whitespace-nowrap">Page</button>
      </div>
      <BlackButton label="Scroll left" d="M6 3v4L3 5z" />
    </div>
    <div className="flex h-full flex-1 items-center justify-center"><span className="size-2 bg-black" /></div>
    <BlackButton label="Scroll right" d="M4 3v4l3-2z" />
    <BlackButton label="Navigator" d="M2 2h5v1H3v4h4v1H2zM5 4h3v3H5z" className="ml-px size-[11px]" />
  </div>
);

const Workspace: React.FC = () => (
  <div className="flex min-w-0 flex-1 flex-col">
    <div className="flex h-[13px] shrink-0 bg-[#e8e8e8] leading-[13px]">
      <button className="w-[46px] bg-[#cfe3fa] text-left text-[#222]" dir="ltr"><span className="pl-[3px]">الكتاب.des</span></button>
      <button aria-label="New tab" className="ml-[2px] w-3 bg-[#dcdcdc] text-[10px] leading-3 text-[#aaa]">+</button>
    </div>
    <div className="shrink-0 border-t border-[#4db4dc]"><TopRuler /></div>
    <div className="flex min-h-0 flex-1">
      <SideRuler />
      <Canvas />
      <div className="flex w-3 shrink-0 flex-col items-center justify-between bg-white">
        <BlackButton label="Scroll up" d="M2 6h6L5 3z" />
        <span className="size-2 bg-black" />
        <BlackButton label="Scroll down" d="M2 4h6L5 7z" />
      </div>
    </div>
    <PageTabs />
    <div className="flex h-[14px] shrink-0 items-center bg-[#f2f2f2] pl-[3px]">
      <span className="h-2 w-[3px] border-x border-[#888]" />
      <Icon name="dropper" className="ml-[9px] size-[9px]" />
      <span className="w-[10px] pl-1 text-[#bbb]">‹</span>
      <NoColour />
      <div className="flex h-[11px] w-[734px]">
        {bottomSwatches.map((c, i) => <button key={i} aria-label={c} className="flex-1 border-r border-b border-[#5a5a5a]/60" style={{ background: c }} />)}
      </div>
      <span className="ml-auto pr-2 text-[#aaa]">› »</span>
    </div>
  </div>
);

const Row: React.FC<{ children: React.ReactNode; className?: string }> = ({ children, className = '' }) => (
  <li className={`flex min-h-0 flex-2 items-center gap-[2px] overflow-hidden whitespace-nowrap ${className}`}>{children}</li>
);

const Expander: React.FC<{ open?: boolean }> = ({ open }) => (
  <svg viewBox="0 0 7 7" className="size-[7px] shrink-0" fill="#222" stroke="#c8c4a0"><path d="M.5.5h6v6h-6zM2 3.500h3" />{!open && <path d="M3.500 2v3" />}</svg>
);

const PageRow: React.FC<{ n: number; last?: boolean }> = ({ n, last }) => (
  <Row className={`bg-linear-to-r from-black from-5% via-[#7a7a7a] via-50% to-[#f2f2f2] pl-1 font-bold text-white shadow-[inset_0_-1px_#bbb] ${last ? 'h-[6px] flex-none' : ''}`}>
    <Expander />
    <svg viewBox="0 0 8 9" className="ml-1 h-[9px] w-2 shrink-0" fill="#333" stroke="#c8c4a0"><path d="M2.500.5h5v8h-7v-6z" /></svg>
    <span>Page {n}</span>
  </Row>
);

const ObjectManager: React.FC = () => (
  <section className="flex w-[160px] shrink-0 flex-col border-l border-[#ddd] bg-[#f3f3f3] text-[#222]">
    <div className="flex h-[13px] shrink-0 items-center bg-[#e8e8e8] pl-[3px]">
      <h2>Object Manager</h2>
      <span className="ml-auto pr-1 text-[#999]">» ✕</span>
    </div>
    <div className="flex h-6 shrink-0 items-center px-[3px]">
      <div className="flex h-[18px] w-[53px] items-center justify-around bg-black">
        <Icon name="layers" className="size-3" />
        <button aria-label="Edit across layers" className="bg-white"><Icon name="layers" className="size-[14px]" /></button>
        <Icon name="layers" className="size-3" />
      </div>
      <p className="pl-[6px] leading-[9px]">Page 57<br />Layer 1</p>
      <BlackButton label="Options" d="M4 3v4l3-2z" className="ml-auto h-[15px] w-[13px]" />
    </div>
    <div className="flex min-h-0 flex-1 pr-[5px] pl-1">
      <ul className="flex min-w-0 flex-1 flex-col bg-black text-white">
        {Array.from({ length: 26 }, (_, i) => <PageRow key={i} n={32 + i} />)}
        <Row className="pl-[27px] shadow-[inset_0_-1px_#888]">
          <span className="h-1 w-[7px] rounded-b bg-[#ccc]" />
          <span className="size-2 rounded-full border-2 border-[#d44] bg-white" />
          <Icon name="dropper" className="size-2 invert" />
          <span className="size-2 bg-[#1c10f0]" />
          <i className="pl-1">Guides</i>
        </Row>
        <Row className="pl-4">
          <Expander open />
          <span className="ml-[3px] h-1 w-[7px] rounded-b bg-[#ccc]" />
          <span className="h-[6px] w-2 bg-[#eee]" />
          <Icon name="dropper" className="size-2 invert" />
          <span className="size-2 bg-[#222]" />
          <b className="pl-1 text-[#e00]">Layer 1</b>
        </Row>
        <Row className="pl-[39px]"><span className="size-[7px] bg-[#04a75b]" /><span className="ml-px bg-[#6fdfe4] px-px pr-1 leading-[10px] text-black">Rectangle</span></Row>
        <Row className="pl-[37px]"><Icon name="letter" className="size-[10px]" /><span>Artistic Text: KacstDecorativ</span></Row>
        <Row className="pl-7"><Expander /><Icon name="letter" className="size-[10px]" /><span>Text: KacstDecorative (Med</span></Row>
        {Array.from({ length: 7 }, (_, i) => <Row key={i} className="pl-[37px]"><Icon name="curve" className="size-[10px]" /><span>Curve</span></Row>)}
        <Row className="pl-7"><Expander open /><Icon name="squares" className="size-[10px]" /><span>Group of 1 Objects</span></Row>
        <Row className="pl-[46px]"><span className="size-[9px] shrink-0 border border-[#ccc]" /><span>Paragraph Text:Taher (N</span></Row>
        <PageRow n={58} last />
      </ul>
      <div className="flex w-[11px] flex-col items-center bg-[#5c5c5c]">
        <BlackButton label="Up" d="M2 6h6L5 3z" />
        <span className="mt-[66px] h-[82px] w-2 bg-black" />
        <BlackButton label="Down" d="M2 4h6L5 7z" className="mt-auto size-[10px]" />
      </div>
    </div>
    <div className="ml-1 mr-[5px] flex h-[11px] shrink-0 items-center bg-[#5c5c5c]">
      <BlackButton label="Left" d="M6 2v6L3 5z" />
      <span className="ml-px h-2 w-[79px] bg-black" />
      <BlackButton label="Right" d="M4 2v6l3-3z" className="ml-auto size-[10px]" />
      <span className="ml-px size-[10px] bg-black" />
    </div>
    <div className="flex h-6 shrink-0 items-center justify-between pr-[5px] pl-[3px]">
      <div className="flex h-[17px] w-[70px] items-center justify-around bg-black">
        {[1, 2, 3, 4].map((n) => <button key={n} aria-label={`New layer ${n}`} className="flex"><Icon name="newLayer" className="size-3" /></button>)}
      </div>
      <button aria-label="Delete" className="flex h-[17px] w-[18px] items-center justify-center bg-black"><Icon name="trash" className="size-[11px]" /></button>
    </div>
  </section>
);

const dockTabs: { name: string; icon: IconName; size: string }[] = [
  { name: 'Object Manager', icon: 'layers', size: 'h-[80px] bg-[#cfe3fa]' },
  { name: 'Insert Character', icon: 'star', size: 'h-[78px]' },
  { name: 'Macro Manager', icon: 'wrench', size: 'h-[80px]' },
  { name: 'Align and Distribute', icon: 'options', size: 'h-[94px]' },
  { name: 'Alignment an...', icon: 'squares', size: 'h-[76px]' },
];

const DockTabs: React.FC = () => (
  <div className="flex w-[12px] shrink-0 flex-col items-center border-l border-[#7cc8ec] bg-[#e2e2e2] pt-4 text-[#333]">
    {dockTabs.map(({ name, icon, size }) => (
      <button key={name} className={`flex w-full shrink-0 flex-col items-center gap-[3px] ${size}`}>
        <Icon name={icon} className="size-[9px]" />
        <span className="whitespace-nowrap leading-[10px] [writing-mode:vertical-rl]">{name}</span>
      </button>
    ))}
    <div className="flex flex-col gap-2 pt-[2px]">
      {(['squares', 'turn', 'hand', 'add'] as IconName[]).map((n) => <Icon key={n} name={n} className="size-[9px]" />)}
    </div>
  </div>
);

const SidePalette: React.FC = () => (
  <div className="flex w-[12px] shrink-0 flex-col items-center border-l border-[#ddd] pt-1">
    <span className="h-[3px] w-2 border-y border-[#888]" />
    <Icon name="dropper" className="mt-2 size-[9px] opacity-40" />
    <span className="h-[11px] text-[#bbb]">⌃</span>
    <NoColour />
    <div className="flex min-h-0 w-full flex-1 flex-col">
      {sideSwatches.map((c, i) => <button key={i} aria-label={c} className="w-full flex-1 border-b border-l border-[#5a5a5a]/60" style={{ background: c }} />)}
    </div>
    <span className="h-[27px] text-[#888]">⌄<br />»</span>
  </div>
);

const StatusBar: React.FC = () => (
  <footer className="flex h-[30px] shrink-0 items-center border-b border-[#555] bg-[#f3f3f3] text-white">
    <span className="w-[98px] pl-2">▸</span>
    <span>Rectangle on Layer 1</span>
    <div className="ml-auto flex w-[293px] items-center">
      <button aria-label="Application launcher" className="flex border border-[#c8102e]"><Icon name="power" className="size-[18px]" /></button>
      <Icon name="fill" className="ml-[6px] size-3" />
      <span className="ml-[2px] size-3 border border-[#2b7a50] bg-[#04a75b]" />
      <span className="w-[102px] pl-2">C:83 M:0 Y:87 K:0</span>
      <Sep />
      <Icon name="pen" className="ml-[2px] size-3" />
      <span className="ml-[2px] size-[11px] shrink-0 bg-[#181818]" />
      <span className="pl-2 whitespace-nowrap">C:0 M:0 Y:0 K:100 2.0 mm</span>
    </div>
  </footer>
);

const App: React.FC = () => (
  <div className="flex h-screen min-h-[600px] flex-col overflow-hidden bg-[#f3f3f3] font-['Open_Sans','DejaVu_Sans',sans-serif] text-[7px] leading-[10px] text-[#333]">
    <Header />
    <StandardBar />
    <CurveBar />
    <div className="flex min-h-0 flex-1">
      <Toolbox />
      <div className="flex min-w-0 flex-1 flex-col">
        <PropertyBar />
        <div className="flex min-h-0 flex-1">
          <Workspace />
          <ObjectManager />
          <DockTabs />
        </div>
      </div>
      <SidePalette />
    </div>
    <StatusBar />
  </div>
);

export default App;
